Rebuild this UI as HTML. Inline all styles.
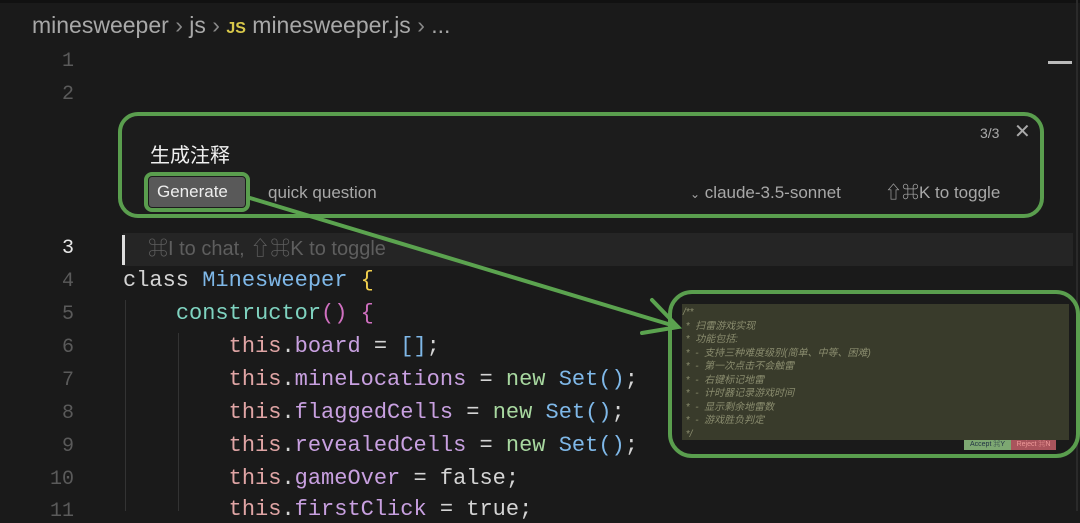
<!DOCTYPE html>
<html><head><meta charset="utf-8"><style>
*{margin:0;padding:0;box-sizing:border-box}
body{width:1080px;height:511px;background:#1a1a1a;overflow:hidden;position:relative;font-family:"Liberation Sans","Noto Sans CJK SC",sans-serif}
.abs{position:absolute;white-space:pre}
.bc{left:32px;top:12px;font-size:23px;color:#a8a8a8}
.ln{position:absolute;left:30px;width:44px;text-align:right;font-family:"Liberation Mono",monospace;font-size:20px;color:#5a5a5a}
.code{position:absolute;left:123px;font-family:"Liberation Mono",monospace;font-size:22px;color:#d4d4d4;white-space:pre}
.k{color:#e0a5a5}.p{color:#c8a0e0}.c{color:#7fd3c0}.t{color:#7fb8e8}.y{color:#f2d04e}.m{color:#d070c0}.g{color:#a8d8a0}
.box{position:absolute;border:4px solid #5a9e4e;border-radius:20px}
.cm{font-family:"Liberation Sans","Noto Sans CJK SC",sans-serif;font-style:italic;font-size:10px;color:#8a8c6e;line-height:13.5px;white-space:pre}
</style></head><body>
<div style="position:absolute;left:0;top:0;width:1080px;height:3px;background:#111"></div>
<div style="position:absolute;left:1076px;top:0;width:2px;height:511px;background:#2a2a2a"></div>
<div class="abs bc">minesweeper <span style="color:#888">›</span> js <span style="color:#888">›</span> <span style="color:#d8c84a;font-weight:bold;font-size:16px">JS</span> minesweeper.js <span style="color:#888">›</span> ...</div>
<div style="position:absolute;left:1048px;top:61px;width:24px;height:3px;background:#bbb"></div>

<div class="ln" style="top:50px">1</div>
<div class="ln" style="top:83px">2</div>
<div class="ln" style="top:237px;color:#e8e8e8">3</div>
<div class="ln" style="top:270px">4</div>
<div class="ln" style="top:303px">5</div>
<div class="ln" style="top:336px">6</div>
<div class="ln" style="top:369px">7</div>
<div class="ln" style="top:402px">8</div>
<div class="ln" style="top:435px">9</div>
<div class="ln" style="top:468px">10</div>
<div class="ln" style="top:500px">11</div>

<div style="position:absolute;left:123px;top:233px;width:950px;height:33px;background:#252525"></div>
<div style="position:absolute;left:122px;top:235px;width:3px;height:30px;background:#ddd"></div>
<div class="abs" style="left:148px;top:238px;font-size:20px;color:#5e5e5e;line-height:22px">⌘I to chat, ⇧⌘K to toggle</div>

<div style="position:absolute;left:125px;top:300px;width:1px;height:211px;background:#333"></div>
<div style="position:absolute;left:178px;top:333px;width:1px;height:178px;background:#333"></div>
<div class="code" style="top:268px">class <span class="t">Minesweeper</span> <span class="y">{</span></div>
<div class="code" style="top:301px">    <span class="c">constructor</span><span class="m">()</span> <span class="m">{</span></div>
<div class="code" style="top:334px">        <span class="k">this</span>.<span class="p">board</span> = <span class="t">[]</span>;</div>
<div class="code" style="top:367px">        <span class="k">this</span>.<span class="p">mineLocations</span> = <span class="g">new</span> <span class="t">Set</span><span class="t">()</span>;</div>
<div class="code" style="top:400px">        <span class="k">this</span>.<span class="p">flaggedCells</span> = <span class="g">new</span> <span class="t">Set</span><span class="t">()</span>;</div>
<div class="code" style="top:433px">        <span class="k">this</span>.<span class="p">revealedCells</span> = <span class="g">new</span> <span class="t">Set</span><span class="t">()</span>;</div>
<div class="code" style="top:466px">        <span class="k">this</span>.<span class="p">gameOver</span> = false;</div>
<div class="code" style="top:497px">        <span class="k">this</span>.<span class="p">firstClick</span> = true;</div>

<div class="box" style="left:118px;top:112px;width:926px;height:106px;background:#1c1c1c"></div>
<div class="abs" style="left:150px;top:139px;font-size:20px;color:#f0f0f0">生成注释</div>
<div class="abs" style="left:980px;top:125px;font-size:14px;color:#aaa">3/3</div>
<div class="abs" style="left:1014px;top:119px;font-size:20px;color:#aaa">✕</div>
<div style="position:absolute;left:144px;top:172px;width:106px;height:40px;border:4px solid #5a9e4e;border-radius:8px"></div>
<div style="position:absolute;left:149px;top:177px;width:96px;height:30px;background:#595959;border-radius:3px"></div>
<div class="abs" style="left:157px;top:182px;font-size:17px;color:#eee">Generate</div>
<div class="abs" style="left:268px;top:182px;font-size:17px;color:#a8a8a8;line-height:22px">quick question</div>
<div class="abs" style="left:690px;top:182px;font-size:17px;color:#a8a8a8;line-height:22px"><span style="font-size:12px">⌄</span> claude-3.5-sonnet</div>
<div class="abs" style="left:885px;top:182px;font-size:17px;color:#a8a8a8;line-height:22px">⇧⌘K to toggle</div>

<div class="box" style="left:668px;top:290px;width:412px;height:168px;border-radius:24px"></div>
<div style="position:absolute;left:682px;top:304px;width:387px;height:136px;background:#393b2b"></div>
<div class="cm" style="position:absolute;left:683px;top:306px">/**
 *  扫雷游戏实现
 *  功能包括:
 *  -  支持三种难度级别(简单、中等、困难)
 *  -  第一次点击不会触雷
 *  -  右键标记地雷
 *  -  计时器记录游戏时间
 *  -  显示剩余地雷数
 *  -  游戏胜负判定
 */</div>
<div style="position:absolute;left:964px;top:440px;width:47px;height:10px;background:#7da872;font-size:7px;color:#234;line-height:10px;text-align:center">Accept ⌘Y</div>
<div style="position:absolute;left:1011px;top:440px;width:45px;height:10px;background:#a9545c;font-size:7px;color:#e99;line-height:10px;text-align:center">Reject ⌘N</div>

<svg style="position:absolute;left:0;top:0" width="1080" height="511">
<g stroke="#5ba34f" stroke-width="4" fill="none" stroke-linecap="round">
<line x1="250" y1="198" x2="678" y2="327"/>
<polyline points="652,300 678,327 642,333"/>
</g></svg>
</body></html>
